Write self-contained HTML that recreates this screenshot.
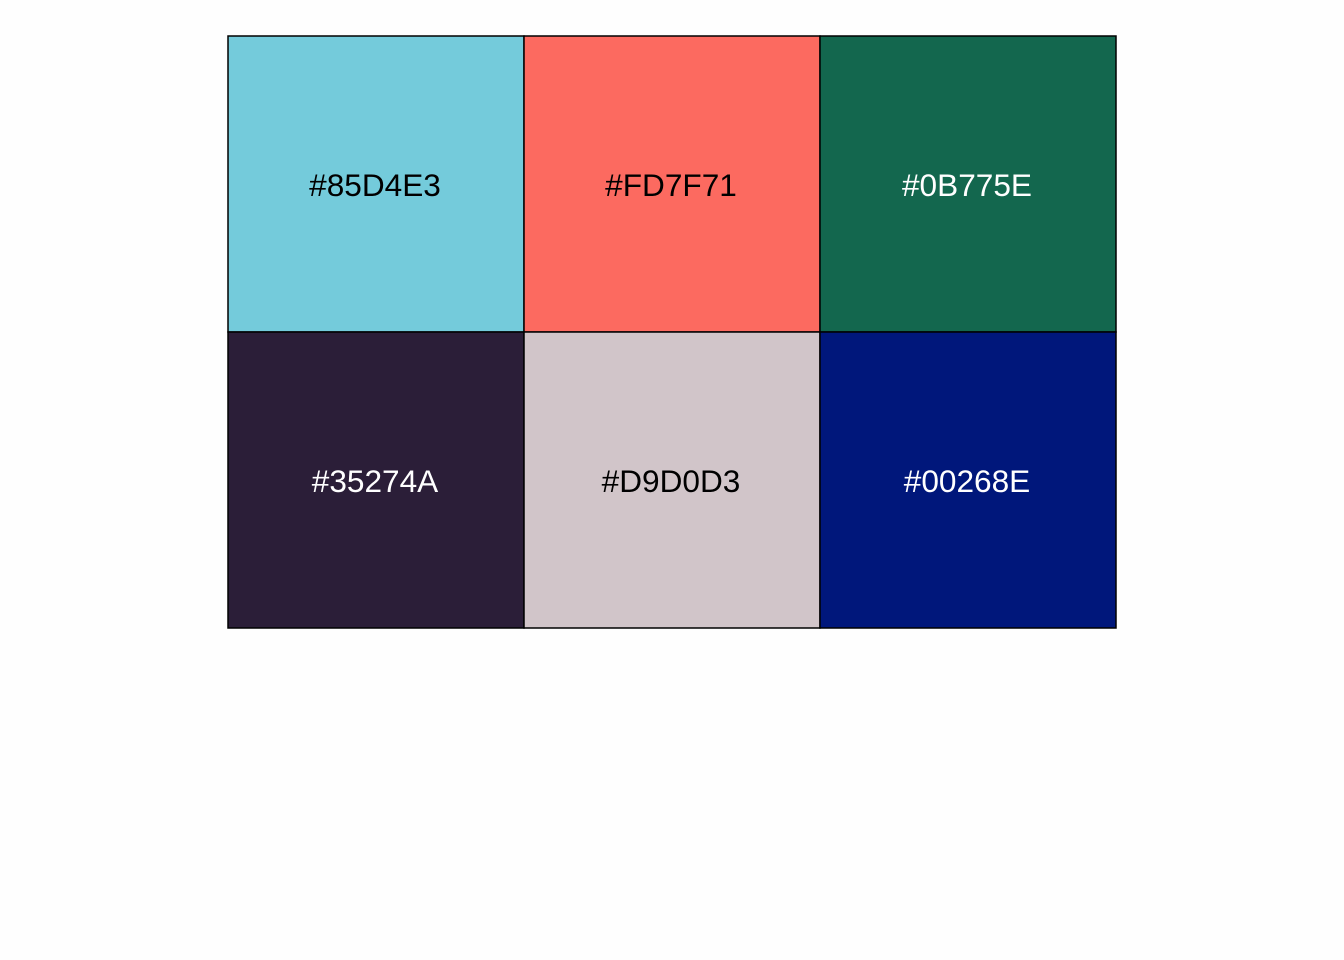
<!DOCTYPE html>
<html><head><style>html,body{margin:0;padding:0;background:#fefefe;width:1344px;height:960px;overflow:hidden}</style></head>
<body>
<svg width="1344" height="960" xmlns="http://www.w3.org/2000/svg" style="display:block">
<rect width="1344" height="960" fill="#fefefe"/>
<g stroke="#000" stroke-width="1.5">
<rect x="228" y="36" width="296" height="296" fill="#74CBDB"/>
<rect x="524" y="36" width="296" height="296" fill="#FC6A60"/>
<rect x="820" y="36" width="296" height="296" fill="#13674E"/>
<rect x="228" y="332" width="296" height="296" fill="#2B1E38"/>
<rect x="524" y="332" width="296" height="296" fill="#D1C5C9"/>
<rect x="820" y="332" width="296" height="296" fill="#00177B"/>
</g>
<g font-family="Liberation Sans, sans-serif" font-size="31.6" text-anchor="middle">
<text x="375" y="196" fill="#000">#85D4E3</text>
<text x="671" y="196" fill="#000">#FD7F71</text>
<text x="967" y="196" fill="#fff">#0B775E</text>
<text x="375" y="492" fill="#fff">#35274A</text>
<text x="671" y="492" fill="#000">#D9D0D3</text>
<text x="967" y="492" fill="#fff">#00268E</text>
</g>
</svg>
</body></html>
